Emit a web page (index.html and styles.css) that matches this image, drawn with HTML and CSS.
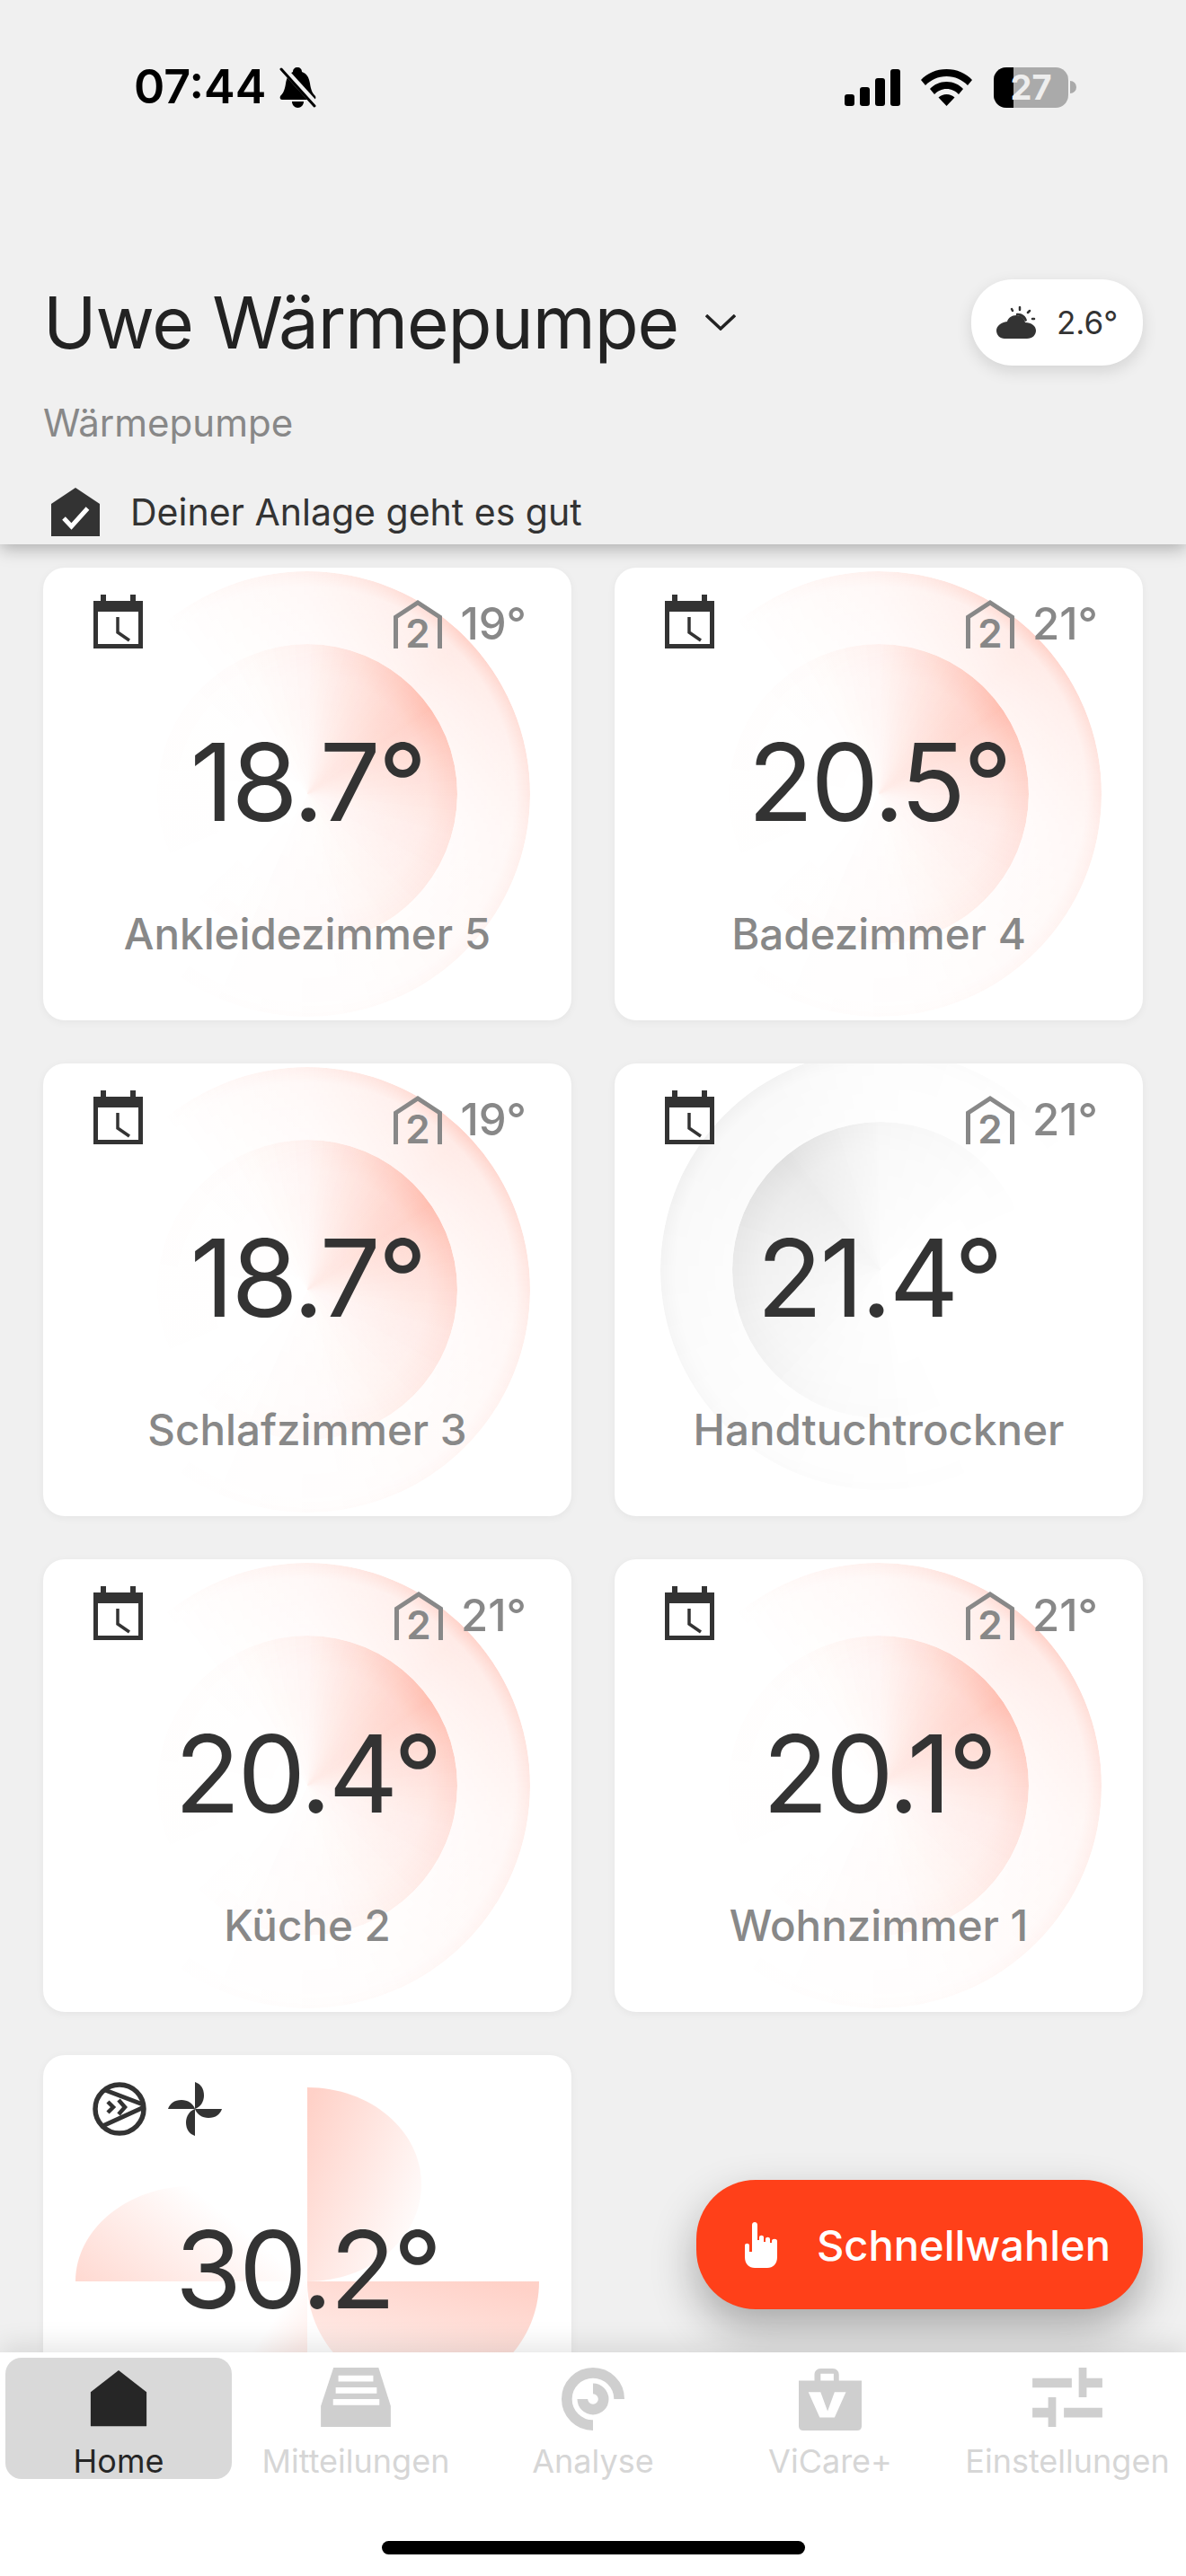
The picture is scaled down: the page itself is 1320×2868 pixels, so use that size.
FILE: index.html
```html
<!DOCTYPE html>
<html>
<head>
	<meta charset="UTF-8">
	<title>Uwe Wärmepumpe</title>
	<link rel="stylesheet" href="styles.css">
</head>
<body>
<svg class="defs">
	<defs>
		<linearGradient id="blade-top" x1="0" y1="0.1" x2="1" y2="0.8">
			<stop offset="0" stop-color="#ff4019" stop-opacity="0.24"/>
			<stop offset="1" stop-color="#ff4019" stop-opacity="0"/>
		</linearGradient>
		<linearGradient id="blade-right" x1="0.8" y1="0" x2="0.3" y2="1">
			<stop offset="0" stop-color="#ff4019" stop-opacity="0.24"/>
			<stop offset="1" stop-color="#ff4019" stop-opacity="0.06"/>
		</linearGradient>
		<linearGradient id="blade-left" x1="0" y1="1" x2="1" y2="0.5">
			<stop offset="0" stop-color="#ff4019" stop-opacity="0.2"/>
			<stop offset="0.8" stop-color="#ff4019" stop-opacity="0"/>
		</linearGradient>
		<linearGradient id="blade-bottom" x1="1" y1="1" x2="0.3" y2="0">
			<stop offset="0" stop-color="#ff4019" stop-opacity="0.24"/>
			<stop offset="0.7" stop-color="#ff4019" stop-opacity="0"/>
		</linearGradient>
		<symbol id="i-calendar" viewBox="0 0 55 60">
			<path fill="#333" fill-rule="evenodd" d="M0 7h8V0h6v7h27V0h6v7h8v53H0zM5 19v36h45V19z"/>
			<path fill="none" stroke="#333" stroke-width="3.500" d="M27 25v17l13 9"/>
		</symbol>
		<symbol id="i-house" viewBox="0 0 54 54">
			<path fill="none" stroke="#888" stroke-width="5" d="M2.500 54V19L27 3l24.500 16v35"/>
			<text x="27" y="53" text-anchor="middle" class="house-num">2</text>
		</symbol>
	</defs>
</svg>

<div class="screen">
	<header class="top">
		<div class="status-bar">
			<div class="status-left">
				<span class="clock">07:44</span>
				<svg class="bell" viewBox="0 0 41 46">
					<path d="M20 1c3 0 5 2 5 5 6 2 8 7 9 13 1 6 2 10 6 14 1 2 0 4-2 4H3c-2 0-3-2-2-4 4-4 5-8 6-14 1-6 3-11 8-13 0-3 2-5 5-5zM14 39h13c0 4-3 7-6.500 7S14 43 14 39z"/>
					<path stroke="#f0f0f0" stroke-width="7" d="M2 0l40 44"/>
					<path stroke="#000" stroke-width="3" stroke-linecap="round" d="M2 3l37 41"/>
				</svg>
			</div>
			<div class="status-right">
				<div class="signal"><i class="b1"></i><i class="b2"></i><i class="b3"></i><i class="b4"></i></div>
				<svg class="wifi" viewBox="0 0 57 41">
					<path d="M28.500 0C40 0 50 4.500 57 12l-5 6C46 12 38 8 28.500 8S11 12 5 18L0 12C7 4.500 17 0 28.500 0z"/>
					<path d="M28.500 14c7.500 0 14 3 18.500 8l-5 6c-3.500-3.500-8-6-13.500-6S18.500 24.500 15 28l-5-6c4.500-5 11-8 18.500-8z"/>
					<path d="M28.500 28c3.500 0 6.500 1.500 9 3.500L28.500 41l-9-9.500c2.500-2 5.500-3.500 9-3.500z"/>
				</svg>
				<div class="battery">
					<div class="battery-body"><div class="battery-fill"></div><span class="battery-num">27</span></div>
					<div class="battery-nub"></div>
				</div>
			</div>
		</div>

		<div class="title-row">
			<h1 class="title">Uwe Wärmepumpe</h1>
			<svg class="chevron" viewBox="0 0 34 18"><path fill="none" stroke="#222" stroke-width="3.500" d="M1 1l16 15L33 1"/></svg>
			<div class="weather">
				<svg class="weather-icon" viewBox="0 0 44 36">
					<path fill="#333" d="M12 17c1-4 5-7 10-7 5 0 9 3 10 8 7 0 12 4 12 9 0 5-4 9-10 9H9c-5 0-9-4-9-9 0-5 5-9 12-10z"/>
					<path fill="#333" d="M22 8c5-1 11 2 12 8l-2 1c-2-4-6-7-10-7z"/>
					<path fill="none" stroke="#333" stroke-width="2.500" stroke-linecap="round" d="M26 1v3M37 5l-2 2M42 14h-2M17 3l1 2"/>
				</svg>
				<span>2.6°</span>
			</div>
		</div>
		<div class="subtitle">Wärmepumpe</div>
		<div class="health">
			<svg class="health-icon" viewBox="0 0 54 54">
				<path fill="#333" d="M27 0l27 18v36H0V18z"/>
				<path fill="none" stroke="#fff" stroke-width="5" d="M14 34l8.500 9 18-20"/>
			</svg>
			<span>Deiner Anlage geht es gut</span>
		</div>
	</header>

	<main class="rooms">
		<div class="room">
			<div class="glow-outer"></div>
			<div class="glow-inner"></div>
			<div class="room-top">
				<svg class="calendar"><use href="#i-calendar"/></svg>
				<div class="target"><svg class="house"><use href="#i-house"/></svg><span>19°</span></div>
			</div>
			<div class="temp">18.7°</div>
			<div class="room-name">Ankleidezimmer 5</div>
		</div>
		<div class="room">
			<div class="glow-outer"></div>
			<div class="glow-inner"></div>
			<div class="room-top">
				<svg class="calendar"><use href="#i-calendar"/></svg>
				<div class="target"><svg class="house"><use href="#i-house"/></svg><span>21°</span></div>
			</div>
			<div class="temp">20.5°</div>
			<div class="room-name">Badezimmer 4</div>
		</div>
		<div class="room">
			<div class="glow-outer"></div>
			<div class="glow-inner"></div>
			<div class="room-top">
				<svg class="calendar"><use href="#i-calendar"/></svg>
				<div class="target"><svg class="house"><use href="#i-house"/></svg><span>19°</span></div>
			</div>
			<div class="temp">18.7°</div>
			<div class="room-name">Schlafzimmer 3</div>
		</div>
		<div class="room">
			<div class="glow-outer grey"></div>
			<div class="glow-inner grey"></div>
			<div class="room-top">
				<svg class="calendar"><use href="#i-calendar"/></svg>
				<div class="target"><svg class="house"><use href="#i-house"/></svg><span>21°</span></div>
			</div>
			<div class="temp">21.4°</div>
			<div class="room-name">Handtuchtrockner</div>
		</div>
		<div class="room">
			<div class="glow-outer"></div>
			<div class="glow-inner"></div>
			<div class="room-top">
				<svg class="calendar"><use href="#i-calendar"/></svg>
				<div class="target"><svg class="house"><use href="#i-house"/></svg><span>21°</span></div>
			</div>
			<div class="temp">20.4°</div>
			<div class="room-name">Küche 2</div>
		</div>
		<div class="room">
			<div class="glow-outer"></div>
			<div class="glow-inner"></div>
			<div class="room-top">
				<svg class="calendar"><use href="#i-calendar"/></svg>
				<div class="target"><svg class="house"><use href="#i-house"/></svg><span>21°</span></div>
			</div>
			<div class="temp">20.1°</div>
			<div class="room-name">Wohnzimmer 1</div>
		</div>
		<div class="room">
			<svg class="blades" viewBox="0 0 588 504">
				<path fill="url(#blade-top)" d="M294 36C364 36 421 84 421 144 421 204 364 252 294 252z"/>
				<path fill="url(#blade-right)" d="M294 252H552C552 322 494 377 423 377 352 377 294 322 294 252z"/>
				<path fill="url(#blade-left)" d="M36 252C36 194 94 146 165 146 236 146 294 194 294 252z"/>
				<path fill="url(#blade-bottom)" d="M294 252C224 252 184 310 184 360 184 420 224 470 294 470z"/>
			</svg>
			<div class="room-top room-top-dhw">
				<svg class="dhw" viewBox="0 0 60 60">
					<circle cx="30" cy="30" r="27" fill="none" stroke="#333" stroke-width="5.500"/>
					<path fill="none" stroke="#333" stroke-width="5" d="M14 9l42 16M9 50l46-21"/>
					<path fill="none" stroke="#333" stroke-width="4.500" d="M17 22l6 6-6 6M29 20l7 8-7 8"/>
				</svg>
				<svg class="fan" viewBox="0 0 60 60">
					<path fill="#333" d="M30 30V0c6 2 10 7 10 15 0 7-4 13-10 15z"/>
					<path fill="#333" d="M30 30h30c-2 6-7 10-15 10-7 0-13-4-15-10z"/>
					<path fill="#333" d="M30 30v30c-6-2-10-7-10-15 0-7 4-13 10-15z"/>
					<path fill="#333" d="M30 30H0c2-6 7-10 15-10 7 0 13 4 15 10z"/>
				</svg>
			</div>
			<div class="temp">30.2°</div>
		</div>
	</main>

	<nav class="tabs">
		<div class="tab tab-active">
			<svg class="tab-icon" viewBox="0 0 80 72"><path fill="#262626" d="M40 3l32 25v39H8V28z"/></svg>
			<span>Home</span>
		</div>
		<div class="tab">
			<svg class="tab-icon" viewBox="0 0 80 72">
				<path fill="#cfcfcf" d="M14.500 0H66l14 44v24H0V44z"/>
				<path fill="#fff" d="M20 9h40v7H20zM17 22.500h47v7H17zM14 36h53v7H14z"/>
			</svg>
			<span>Mitteilungen</span>
		</div>
		<div class="tab">
			<svg class="tab-icon" viewBox="0 0 80 72">
				<path fill="none" stroke="#cfcfcf" stroke-width="12" d="M70 36A30 30 0 1 0 40 66"/>
				<path fill="none" stroke="#cfcfcf" stroke-width="12" d="M40 24A12 12 0 1 1 28 36"/>
			</svg>
			<span>Analyse</span>
		</div>
		<div class="tab">
			<svg class="tab-icon" viewBox="0 0 80 72">
				<path fill="#cfcfcf" fill-rule="evenodd" d="M4 15h18V8c0-4 3-7 7-7h14c4 0 7 3 7 7v7h26v52c0 3-2 5-5 5H9c-3 0-5-2-5-5zM29 7v8h15V7z"/>
				<path fill="#fff" d="M15 28h14l8 22 8-22h13L45 57H28z"/>
			</svg>
			<span>ViCare+</span>
		</div>
		<div class="tab">
			<svg class="tab-icon" viewBox="0 0 80 72">
				<path fill="#cfcfcf" d="M0 12h45v11H0zM53 0h9v12h18v11H62v11h-9zM0 46h18V34h9v34h-9V57H0zM36 46h44v11H36z"/>
			</svg>
			<span>Einstellungen</span>
		</div>
	</nav>
	<div class="home-bar"></div>

	<button class="quick" type="button">
		<svg class="hand" viewBox="0 0 36 51">
			<path fill="#fff" d="M8 3c0-4 6-4 6 0v17h2v-3c0-3 5-3 5 0v5h2v-3c0-3 5-3 5 0v4h2v-2c0-3 6-3 6 0v18c0 8-5 12-11 12H11C5 51 0 47 0 39V26c0-3 5-3 5 0v7h3z"/>
		</svg>
		<span>Schnellwahlen</span>
	</button>
</div>
</body>
</html>
```

FILE: styles.css
```css
* {
	box-sizing: border-box;
}

html, body {
	margin: 0;
	padding: 0;
}

body {
	width: 1320px;
	height: 2868px;
	overflow: hidden;
	background-color: #f0f0f0;
	font-family: Inter, "Liberation Sans", sans-serif;
}

.defs {
	width: 0;
	height: 0;
	display: block;
}

.screen {
	position: relative;
	width: 1320px;
	height: 2868px;
	display: flex;
	flex-direction: column;
	overflow: hidden;
}

/* header with status bar */
.top {
	position: relative;
	z-index: 2;
	height: 606px;
	padding: 0 48px 0 48px;
	background-color: #f0f0f0;
	box-shadow: 0 5px 18px rgba(0, 0, 0, 0.28);
}

.status-bar {
	height: 311px;
	padding: 74px 74px 0 101px;
	display: flex;
	justify-content: space-between;
	align-items: flex-start;
}

.status-left {
	display: flex;
	align-items: center;
	gap: 15px;
	height: 46px;
}

.clock {
	font-size: 52px;
	font-weight: 600;
	color: #000;
	line-height: 46px;
}

.bell {
	width: 41px;
	height: 46px;
}

.status-right {
	display: flex;
	align-items: center;
	height: 46px;
}

.signal {
	display: flex;
	align-items: flex-end;
	gap: 6px;
	height: 41px;
	margin-right: 23px;
}

.signal i {
	display: block;
	width: 11px;
	background-color: #000;
	border-radius: 3px;
}

.signal .b1 { height: 13px; }
.signal .b2 { height: 21px; }
.signal .b3 { height: 31px; }
.signal .b4 { height: 41px; }

.wifi {
	width: 57px;
	height: 41px;
	margin-right: 24px;
}

.battery {
	display: flex;
	align-items: center;
}

.battery-body {
	position: relative;
	width: 83px;
	height: 45px;
	border-radius: 14px;
	background-color: #aaa;
	overflow: hidden;
}

.battery-fill {
	width: 22px;
	height: 100%;
	background-color: #000;
}

.battery-num {
	position: absolute;
	left: 0;
	right: 0;
	top: 0;
	text-align: center;
	font-size: 38px;
	font-weight: 700;
	line-height: 45px;
	color: #eee;
}

.battery-nub {
	width: 7px;
	height: 14px;
	margin-left: 2px;
	background-color: #aaa;
	border-radius: 0 7px 7px 0;
}

.title-row {
	display: flex;
	align-items: center;
	height: 96px;
}

.title {
	margin: 0;
	font-size: 80px;
	font-weight: 400;
	letter-spacing: -1.1px;
	color: #222;
	line-height: 96px;
}

.chevron {
	width: 34px;
	height: 18px;
	margin-left: 30px;
}

.weather {
	margin-left: auto;
	width: 191px;
	height: 96px;
	display: flex;
	align-items: center;
	justify-content: center;
	gap: 23px;
	border-radius: 46px;
	background-color: #fff;
	box-shadow: 0 6px 18px rgba(0, 0, 0, 0.12);
	font-size: 35px;
	color: #333;
}

.weather-icon {
	width: 44px;
	height: 36px;
}

.subtitle {
	margin-top: 40px;
	font-size: 42px;
	line-height: 48px;
	color: #888;
}

.health {
	margin-top: 48px;
	display: flex;
	align-items: center;
	gap: 34px;
	padding-left: 9px;
	font-size: 41px;
	color: #333;
}

.health-icon {
	width: 54px;
	height: 54px;
}

/* rooms */
.rooms {
	flex: 1;
	min-height: 0;
	overflow: hidden;
	display: grid;
	grid-template-columns: 588px 588px;
	grid-auto-rows: 504px;
	gap: 48px;
	padding: 26px 48px 0;
	align-content: start;
}

.room {
	position: relative;
	overflow: hidden;
	background-color: #fff;
	border-radius: 24px;
	box-shadow: 0 2px 10px rgba(0, 0, 0, 0.05);
	display: flex;
	flex-direction: column;
	align-items: center;
}

/* the two rings behind the temperature */
.glow-outer, .glow-inner {
	position: absolute;
	border-radius: 50%;
}

.glow-outer {
	left: 46px;
	top: 4px;
	width: 496px;
	height: 496px;
	background: conic-gradient(rgba(255, 64, 25, 0.08) 0deg, rgba(255, 64, 25, 0.24) 45deg, rgba(255, 64, 25, 0.09) 100deg, rgba(255, 64, 25, 0.02) 165deg, rgba(255, 64, 25, 0) 220deg, rgba(255, 64, 25, 0) 320deg, rgba(255, 64, 25, 0.08) 360deg);
	-webkit-mask-image: radial-gradient(circle closest-side, rgba(0, 0, 0, 0.25) 66%, rgba(0, 0, 0, 0.45) 93%, #000 100%);
	mask-image: radial-gradient(circle closest-side, rgba(0, 0, 0, 0.25) 66%, rgba(0, 0, 0, 0.45) 93%, #000 100%);
}

.glow-inner {
	left: 127px;
	top: 85px;
	width: 334px;
	height: 334px;
	background: conic-gradient(rgba(255, 64, 25, 0.05) 0deg, rgba(255, 64, 25, 0.3) 55deg, rgba(255, 64, 25, 0.13) 105deg, rgba(255, 64, 25, 0.03) 170deg, rgba(255, 64, 25, 0) 230deg, rgba(255, 64, 25, 0.01) 330deg, rgba(255, 64, 25, 0.05) 360deg);
	-webkit-mask-image: radial-gradient(circle closest-side, rgba(0, 0, 0, 0.1) 0, rgba(0, 0, 0, 0.6) 80%, #000 100%);
	mask-image: radial-gradient(circle closest-side, rgba(0, 0, 0, 0.1) 0, rgba(0, 0, 0, 0.6) 80%, #000 100%);
}

.glow-outer.grey {
	left: 51px;
	top: -15px;
	width: 490px;
	height: 490px;
	background: conic-gradient(rgba(0, 0, 0, 0.02) 0deg, rgba(0, 0, 0, 0) 60deg, rgba(0, 0, 0, 0) 150deg, rgba(0, 0, 0, 0.015) 210deg, rgba(0, 0, 0, 0.06) 300deg, rgba(0, 0, 0, 0.05) 330deg, rgba(0, 0, 0, 0.02) 360deg);
}

.glow-inner.grey {
	left: 131px;
	top: 65px;
	width: 330px;
	height: 330px;
	background: conic-gradient(rgba(0, 0, 0, 0.03) 0deg, rgba(0, 0, 0, 0) 70deg, rgba(0, 0, 0, 0) 150deg, rgba(0, 0, 0, 0.015) 200deg, rgba(0, 0, 0, 0.08) 280deg, rgba(0, 0, 0, 0.11) 320deg, rgba(0, 0, 0, 0.03) 360deg);
}

.blades {
	position: absolute;
	left: 0;
	top: 0;
	width: 588px;
	height: 504px;
}

.room-top {
	position: relative;
	width: 100%;
	height: 90px;
	padding: 30px 50px 0 56px;
	display: flex;
	justify-content: space-between;
	align-items: flex-start;
}

.calendar {
	width: 55px;
	height: 60px;
}

.target {
	display: flex;
	align-items: center;
	gap: 20px;
	margin-top: 3px;
	font-size: 49px;
	font-weight: 500;
	color: #888;
}

.house {
	width: 54px;
	height: 54px;
}

.house-num {
	font-family: Inter, sans-serif;
	font-size: 44px;
	font-weight: 600;
	fill: #888;
}

.temp {
	position: relative;
	margin-top: 79px;
	font-size: 120px;
	line-height: 140px;
	font-weight: 400;
	letter-spacing: -3px;
	color: #333;
}

.room-name {
	position: relative;
	margin-top: 72px;
	font-size: 47.500px;
	line-height: 54px;
	font-weight: 500;
	color: #888;
}

.room-top-dhw {
	justify-content: flex-start;
	gap: 24px;
	padding: 30px 0 0 55px;
}

.dhw, .fan {
	width: 60px;
	height: 60px;
}

/* bottom tabs */
.tabs {
	position: relative;
	z-index: 3;
	height: 249px;
	padding: 6px 0 0 0;
	background-color: #fff;
	box-shadow: 0 -8px 28px rgba(0, 0, 0, 0.1);
	display: grid;
	grid-template-columns: repeat(5, 264px);
	align-items: start;
	font-size: 36px;
	color: #d6d6d6;
}

.tab {
	height: 135px;
	display: flex;
	flex-direction: column;
	align-items: center;
	padding-top: 11px;
	white-space: nowrap;
}

.tab span {
	margin-top: 14px;
	line-height: 40px;
}

.tab-active {
	margin: 0 6px;
	background-color: #d9d9d9;
	border-radius: 18px;
	color: #262626;
}

.tab-icon {
	width: 80px;
	height: 72px;
}

.home-bar {
	position: absolute;
	z-index: 4;
	left: 425px;
	top: 2829px;
	width: 471px;
	height: 15px;
	border-radius: 8px;
	background-color: #000;
}

/* floating button */
.quick {
	position: absolute;
	z-index: 2;
	left: 775px;
	top: 2427px;
	width: 497px;
	height: 144px;
	padding: 0 0 0 54px;
	display: flex;
	align-items: center;
	gap: 44px;
	border: none;
	border-radius: 66px;
	background-color: #ff4019;
	box-shadow: 0 22px 50px rgba(0, 0, 0, 0.3);
	font-family: Inter, sans-serif;
	font-size: 47px;
	font-weight: 500;
	color: #fff;
}

.hand {
	width: 36px;
	height: 51px;
}
```
